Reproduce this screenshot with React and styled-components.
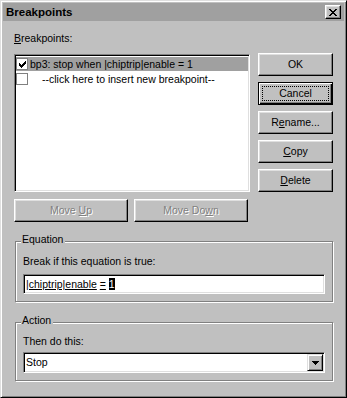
import React from "react";
import styled, { createGlobalStyle } from "styled-components";

const GlobalStyle = createGlobalStyle`
  html, body { margin: 0; padding: 0; background: #c0c0c0; }
  body { font-family: "Liberation Sans", Arial, sans-serif; font-size: 10.5px; color: #000; }
  *, *::before, *::after { box-sizing: border-box; }
`;

const Window = styled.div`
  width: 347px;
  height: 398px;
  display: flex;
  flex-direction: column;
  background: #c0c0c0;
  border: 1px solid;
  border-color: #dfdfdf #000 #000 #dfdfdf;
  box-shadow: inset 1px 1px #fff, inset -1px -1px #808080;
  padding: 2px;
`;

const TitleBar = styled.div`
  flex: none;
  height: 18px;
  background: #a0a0a0;
  display: flex;
  align-items: center;
  justify-content: space-between;
  padding: 0 3px;
`;

const Title = styled.span`
  font-weight: bold;
  font-size: 11.5px;
  line-height: 18px;
`;

const CloseButton = styled.div`
  width: 16px;
  height: 14px;
  display: flex;
  align-items: center;
  justify-content: center;
  background: #c0c0c0;
  border: 1px solid;
  border-color: #fff #000 #000 #fff;
  box-shadow: inset -1px -1px #808080, inset 1px 1px #dfdfdf;
`;

const Main = styled.div`
  padding: 11px 11px 0;
  display: flex;
  flex-direction: column;
`;

const TopRow = styled.div`
  display: flex;
  gap: 8px;
`;

const LeftCol = styled.div`
  width: 236px;
  display: flex;
  flex-direction: column;
`;

const RightCol = styled.div`
  width: 75px;
  display: flex;
  flex-direction: column;
  gap: 6px;
  padding-top: 21px;
`;

const Label = styled.div`
  line-height: 13px;
  white-space: nowrap;
  margin-bottom: ${(p) => p.$mb || 0}px;
`;

const U = styled.span`
  text-decoration: underline;
`;

const ListBox = styled.div`
  height: 138px;
  background: #fff;
  border: 1px solid;
  border-color: #808080 #fff #fff #808080;
  box-shadow: inset 1px 1px #000, inset -1px -1px #dfdfdf;
  padding: 2px 1px 1px 1px;
  display: flex;
  flex-direction: column;
  gap: 1px;
`;

const Row = styled.div`
  display: flex;
  align-items: center;
  height: 14px;
  line-height: 14px;
  white-space: nowrap;
  background: ${(p) => (p.$selected ? "#a0a0a0" : "transparent")};
`;

const CheckBox = styled.span`
  flex: none;
  width: 12px;
  height: 12px;
  background: #fff;
  border: 1px solid #808080;
  display: flex;
  align-items: center;
  justify-content: center;
`;

const RowText = styled.span`
  padding-left: ${(p) => p.$indent}px;
`;

const MoveRow = styled.div`
  display: flex;
  gap: 6px;
  margin-top: 7px;
`;

const Button = styled.div`
  width: ${(p) => p.$w || 75}px;
  height: 23px;
  flex: none;
  display: flex;
  align-items: center;
  justify-content: center;
  line-height: 13px;
  white-space: nowrap;
  background: #c0c0c0;
  color: ${(p) => (p.$disabled ? "#808080" : "#000")};
  text-shadow: ${(p) => (p.$disabled ? "1px 1px 0 #fff" : "none")};
  border: 1px solid;
  border-color: ${(p) => (p.$default ? "#000" : "#fff #000 #000 #fff")};
  box-shadow: ${(p) =>
    p.$default
      ? "inset 1px 1px #fff, inset -1px -1px #000, inset -2px -2px #808080"
      : "inset -1px -1px #808080, inset 1px 1px #dfdfdf"};
  outline: ${(p) => (p.$focused ? "1px dotted #000" : "none")};
  outline-offset: -5px;
`;

const ButtonText = styled.span`
  white-space: pre;
`;

const Group = styled.div`
  position: relative;
  margin: ${(p) => p.$mt}px 0 0 1px;
  border: 1px solid #808080;
  box-shadow: inset 1px 1px #fff, 1px 1px #fff;
  padding: ${(p) => p.$pt}px 7px 7px 7px;
  display: flex;
  flex-direction: column;
`;

const GroupLabel = styled.span`
  position: absolute;
  top: -9px;
  left: 5px;
  padding: 0 2px 0 1px;
  background: #c0c0c0;
  line-height: 13px;
`;

const Field = styled.div`
  height: ${(p) => p.$h}px;
  margin-top: ${(p) => p.$mt}px;
  background: #fff;
  border: 1px solid;
  border-color: #808080 #fff #fff #808080;
  box-shadow: inset 1px 1px #000, inset -1px -1px #dfdfdf;
  display: flex;
  align-items: ${(p) => (p.$stretch ? "stretch" : "center")};
  justify-content: space-between;
  padding: 1px 1px 1px 2px;
  white-space: nowrap;
`;

const FieldText = styled.span`
  line-height: 15px;
  align-self: center;
  white-space: pre;
`;

const Selected = styled.span`
  background: #000;
  color: #fff;
`;

const DropButton = styled.span`
  width: 16px;
  flex: none;
  display: flex;
  align-items: center;
  justify-content: center;
  background: #c0c0c0;
  border: 1px solid;
  border-color: #dfdfdf #000 #000 #dfdfdf;
  box-shadow: inset 1px 1px #fff, inset -1px -1px #808080;
`;

const PixelGlyph = ({ rows, color = "#000" }) => {
  const w = rows[0].length;
  const h = rows.length;
  const rects = [];
  rows.forEach((r, y) =>
    r.split("").forEach((c, x) => {
      if (c === "#") rects.push(<rect key={`${x}-${y}`} x={x} y={y} width="1" height="1" />);
    })
  );
  return (
    <svg width={w} height={h} viewBox={`0 0 ${w} ${h}`} fill={color} shapeRendering="crispEdges">
      {rects}
    </svg>
  );
};

const X_GLYPH = ["##....##", ".##..##.", "..####..", "...##...", "..####..", ".##..##.", "##....##"];
const CHECK_GLYPH = ["......#", ".....##", "#...###", "##.###.", "#####..", ".###...", "..#...."];
const ARROW_GLYPH = ["#######", ".#####.", "..###..", "...#..."];

export default function App() {
  return (
    <>
      <GlobalStyle />
      <Window>
        <TitleBar>
          <Title>Breakpoints</Title>
          <CloseButton>
            <PixelGlyph rows={X_GLYPH} />
          </CloseButton>
        </TitleBar>
        <Main>
          <TopRow>
            <LeftCol>
              <Label $mb={9}>
                <U>B</U>reakpoints:
              </Label>
              <ListBox>
                <Row $selected>
                  <CheckBox>
                    <PixelGlyph rows={CHECK_GLYPH} />
                  </CheckBox>
                  <RowText $indent={2}>bp3: stop when |chiptrip|enable = 1</RowText>
                </Row>
                <Row>
                  <CheckBox />
                  <RowText $indent={14}>--click here to insert new breakpoint--</RowText>
                </Row>
              </ListBox>
              <MoveRow>
                <Button $w={114} $disabled>
                  <ButtonText>
                    Move <U>U</U>p
                  </ButtonText>
                </Button>
                <Button $w={114} $disabled>
                  <ButtonText>
                    Move Do<U>w</U>n
                  </ButtonText>
                </Button>
              </MoveRow>
            </LeftCol>
            <RightCol>
              <Button>
                <ButtonText>OK</ButtonText>
              </Button>
              <Button $default $focused>
                <ButtonText>Cancel</ButtonText>
              </Button>
              <Button>
                <ButtonText>
                  R<U>e</U>name...
                </ButtonText>
              </Button>
              <Button>
                <ButtonText>
                  <U>C</U>opy
                </ButtonText>
              </Button>
              <Button>
                <ButtonText>
                  <U>D</U>elete
                </ButtonText>
              </Button>
            </RightCol>
          </TopRow>
          <Group $mt={19} $pt={13}>
            <GroupLabel>Equation</GroupLabel>
            <Label>Break if this equation is true:</Label>
            <Field $h={20} $mt={6}>
              <FieldText>
                <U>|chiptrip|enable</U> <U>=</U> <Selected>1</Selected>
              </FieldText>
            </Field>
          </Group>
          <Group $mt={20} $pt={12}>
            <GroupLabel>Action</GroupLabel>
            <Label>Then do this:</Label>
            <Field $h={21} $mt={4} $stretch>
              <FieldText>Stop</FieldText>
              <DropButton>
                <PixelGlyph rows={ARROW_GLYPH} />
              </DropButton>
            </Field>
          </Group>
        </Main>
      </Window>
    </>
  );
}
